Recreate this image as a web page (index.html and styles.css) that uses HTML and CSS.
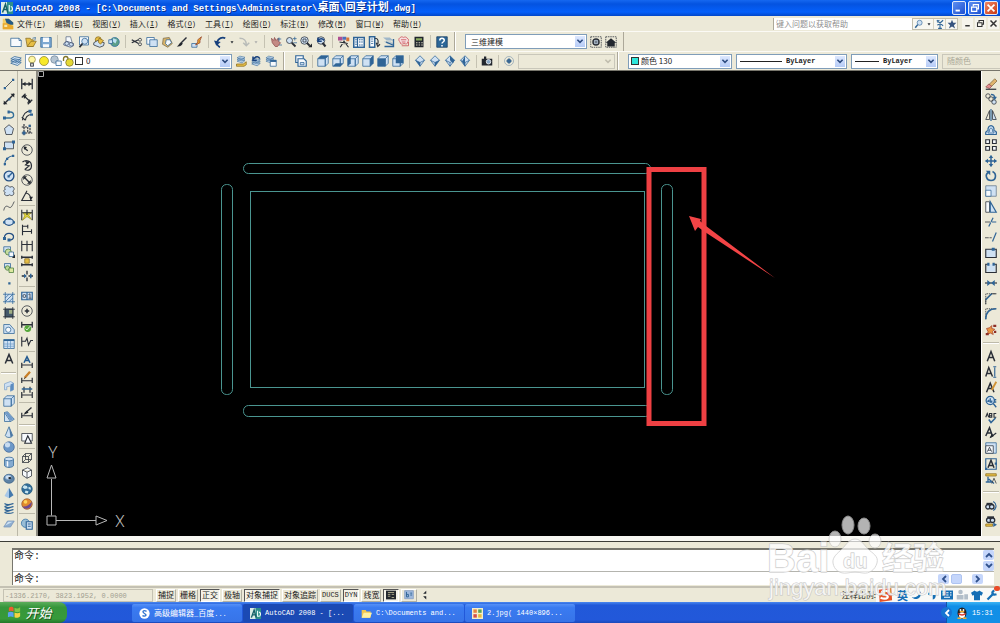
FILE: index.html
```html
<!DOCTYPE html>
<html lang="zh-CN">
<head>
<meta charset="utf-8">
<title>AutoCAD 2008</title>
<link rel="stylesheet" href="styles.css">
</head>
<body>
<svg class="sprites" aria-hidden="true">
  <symbol id="cube" viewBox="0 0 16 16"><path class="b l" d="M1 5h10v10H1zM1 5l4-4h10l-4 4M15 1v10l-4 4V5"/></symbol>
  <symbol id="dia" viewBox="0 0 16 16"><path class="b l" d="M8 1l6 6-6 8-6-8z"/><path class="b" d="M2 7l6 3 6-3M8 10v5"/></symbol>
  <symbol id="stack" viewBox="0 0 16 16"><path class="b l" d="M1 11l5-3 9 2-5 4zM1 8l5-3 9 2-5 4zM1 5l5-3 9 2-5 4z"/></symbol>
  <symbol id="down" viewBox="0 0 8 8"><path d="M1 2l3 3 3-3" fill="none" stroke="currentColor" stroke-width="1.8"/></symbol>
  <symbol id="acad" viewBox="0 0 16 16"><path fill="#d9ebe6" stroke="none" d="M0 0h16v16H0z"/><path fill="#2d8f8c" stroke="none" d="M8 0h8v16H8z"/><path d="M2 14L6 3l3 11M3 10h5" stroke="#156068" stroke-width="2" fill="none"/><path d="M11 4v8h2c3 0 3-6 0-6" stroke="#eafaf6" stroke-width="1.6" fill="none"/></symbol>
</svg>

<header class="titlebar">
  <svg class="app-icon"><use href="#acad"/></svg>
  <h1>AutoCAD 2008 - [C:\Documents and Settings\Administrator\<span>桌面</span>\<span>回享计划</span>.dwg]</h1>
  <div class="window-buttons">
    <button aria-label="最小化"><svg viewBox="0 0 14 14"><path d="M3 10h5" stroke-width="2.2"/></svg></button>
    <button aria-label="还原"><svg viewBox="0 0 14 14"><path d="M5 5V3h6v5H9M3 6h6v5H3z" stroke-width="1.4"/></svg></button>
    <button class="close" aria-label="关闭"><svg viewBox="0 0 14 14"><path d="M3 3l8 8M11 3l-8 8" stroke-width="2"/></svg></button>
  </div>
</header>

<nav class="menubar" aria-label="菜单">
  <svg class="doc-icon" viewBox="0 0 16 16"><path fill="#f3cd62" d="M1 1h8l6 5v9H1z"/><path fill="#245a86" d="M4 1h5l6 5v3H7z"/><path fill="#e9a92c" d="M1 7h6l8 4v4H1z"/><path fill="#f8e7a5" d="M3 9h4v3H3z"/></svg>
  <div class="menus">
    <button>文件<span>(<u>F</u>)</span></button>
    <button>编辑<span>(<u>E</u>)</span></button>
    <button>视图<span>(<u>V</u>)</span></button>
    <button>插入<span>(<u>I</u>)</span></button>
    <button>格式<span>(<u>O</u>)</span></button>
    <button>工具<span>(<u>T</u>)</span></button>
    <button>绘图<span>(<u>D</u>)</span></button>
    <button>标注<span>(<u>N</u>)</span></button>
    <button>修改<span>(<u>M</u>)</span></button>
    <button>窗口<span>(<u>W</u>)</span></button>
    <button>帮助<span>(<u>H</u>)</span></button>
  </div>
  <input class="help-box" type="text" placeholder="键入问题以获取帮助" aria-label="键入问题以获取帮助">
  <div class="help-buttons">
    <button class="wide" aria-label="搜索"><svg viewBox="0 0 16 16"><circle class="b l" cx="9" cy="6" r="4"/><path class="b" d="M6 9l-4 5" stroke-width="2.4"/></svg><svg class="tiny" viewBox="0 0 8 8"><path class="kf" d="M2 3h4L4 6z"/></svg></button>
    <button aria-label="通讯中心"><svg viewBox="0 0 16 16"><path class="b" d="M8 8v7M5 15h6M3 2l10 9M13 2L4 10M3 5l4-3" stroke-width="1.8"/></svg></button>
    <button aria-label="收藏夹"><svg viewBox="0 0 16 16"><path fill="#37547f" stroke="none" d="M8 1l2 5h5l-4 4 2 5-5-3-5 3 2-5-4-4h5z"/></svg></button>
  </div>
  <div class="mdi-buttons">
    <button aria-label="最小化文档"><svg viewBox="0 0 12 12"><path d="M3 9h6" stroke-width="2"/></svg></button>
    <button aria-label="还原文档"><svg viewBox="0 0 12 12"><path d="M4 4V2h6v5H8M2 5h6v5H2z" stroke-width="1.4"/></svg></button>
    <button aria-label="关闭文档"><svg viewBox="0 0 12 12"><path d="M2 2l8 8M10 2l-8 8" stroke-width="2"/></svg></button>
  </div>
</nav>

<div class="toolbar-row">
  <div class="toolbar" role="toolbar" aria-label="标准">
    <button aria-label="新建"><svg viewBox="0 0 16 16"><path class="b w" d="M1 3h11l3 3v8H1z"/><path class="b" d="M12 3v3h3"/></svg></button>
    <button aria-label="打开"><svg viewBox="0 0 16 16"><path class="y" d="M1 3h6l1 2h3v9H3z"/><path class="y" d="M3 14l5-7h7l-4 7z"/><path class="b" d="M10 3l4-1-1 4"/></svg></button>
    <button aria-label="保存"><svg viewBox="0 0 16 16"><path fill="#7ea9d2" class="b" d="M1 2h14v13H1z"/><path class="w" stroke="none" d="M4 2h8v6H4zM4 11h8v4H4z"/></svg></button>
    <i></i>
    <button aria-label="打印"><svg viewBox="0 0 16 16"><path class="w" stroke="#5b6b86" d="M4 8V1h6l2 7"/><path class="l" stroke="#4a5a78" d="M1 10l4-3 9 3v3l-4 2-9-3z"/><circle cx="5" cy="10" r="2.500" stroke="#4a5a78"/><circle cx="11" cy="11" r="2.500" stroke="#4a5a78"/></svg></button>
    <button aria-label="打印预览"><svg viewBox="0 0 16 16"><path class="b w" d="M2 1h12v11H2z"/><circle class="b l" cx="9" cy="7" r="4"/><path d="M6 10l-4 5" stroke-width="2.4"/></svg></button>
    <button aria-label="发布"><svg viewBox="0 0 16 16"><circle class="y" cx="7" cy="5" r="4"/><path class="l" d="M1 9l5-3 9 3-1 4-5 2-8-3z"/><path class="y" d="M8 3l6 3-4 5-3-3z"/></svg></button>
    <button aria-label="三维 DWF"><svg viewBox="0 0 16 16"><circle cx="9" cy="8" r="6" fill="#5d9f88" stroke="#2f6ca3"/><path fill="#bde0f4" stroke="none" d="M7 3l5 2-2 5-4-3z"/><path class="b l" d="M1 5h5v5H1z"/></svg></button>
    <i></i>
    <button aria-label="剪切"><svg viewBox="0 0 16 16"><path d="M1 5l9 5M1 9l9-4" stroke-width="1.8"/><circle cx="12" cy="5" r="2"/><circle cx="12" cy="11" r="2"/></svg></button>
    <button aria-label="复制"><svg viewBox="0 0 16 16"><path class="b w" d="M1 2h10v9H1z"/><path class="b l" d="M5 5h10v9H5z"/></svg></button>
    <button aria-label="粘贴"><svg viewBox="0 0 16 16"><path fill="#d9b56a" stroke="#7a6a48" d="M3 3l8-1 4 8-6 5-7-4z"/><path class="b w" d="M7 5h5l2 4-5 4-3-3z"/></svg></button>
    <button aria-label="特性匹配"><svg viewBox="0 0 16 16"><path d="M14 2L7 9" stroke-width="2"/><path class="kf" d="M7 8l2 2c-2 4-5 4-8 4 3-1 3-5 6-6z"/></svg></button>
    <button aria-label="块编辑器"><svg viewBox="0 0 16 16"><path class="b l" d="M1 10h7v5H1z"/><path fill="#e8a32c" stroke="#94432c" d="M14 1L9 5v3l-3 4 6-3V6z"/></svg></button>
    <i></i>
    <button aria-label="放弃"><svg viewBox="0 0 16 16"><path d="M4 8c2-5 7-7 11-5" stroke="#17407c" stroke-width="2.4"/><path fill="#17407c" stroke="none" d="M0 6l9 2-6 5z"/><path d="M4 9c0 3 2 5 4 6" stroke="#17407c" stroke-width="2"/></svg></button>
    <button class="drop" aria-label="放弃列表"><svg viewBox="0 0 8 8"><path class="kf" d="M2 3h4L4 6z"/></svg></button>
    <button aria-label="重做"><svg viewBox="0 0 16 16"><path d="M2 3c7 0 9 3 9 9M7 9l4 4 4-4" stroke="#b8bbb8" stroke-width="2"/></svg></button>
    <button class="drop" aria-label="重做列表"><svg viewBox="0 0 8 8"><path fill="#aaa" stroke="none" d="M2 3h4L4 6z"/></svg></button>
    <i></i>
    <button aria-label="平移"><svg viewBox="0 0 16 16"><path fill="#c38a84" stroke="#8c4b4c" d="M2 3l3 3 1-4 2 4 3-3v4l3 2-4 5H7L3 9z"/><path class="b" d="M12 2v5M10 4h5M12 12h4"/></svg></button>
    <button aria-label="实时缩放"><svg viewBox="0 0 16 16"><circle class="l" cx="6" cy="6" r="4"/><path d="M9 9l5 5" stroke-width="2.4"/><path class="b" d="M13 1v5M10.500 3.500h5M11 9h5"/></svg></button>
    <button aria-label="窗口缩放"><svg viewBox="0 0 16 16"><circle class="l" cx="6" cy="6" r="5"/><path d="M4 4h4v4H4z"/><path d="M9 9l4 4" stroke-width="2.400"/><path class="kf" d="M11 15h5v-5z"/></svg></button>
    <button aria-label="上一个缩放"><svg viewBox="0 0 16 16"><circle class="l" cx="8" cy="6" r="5"/><path d="M10 9l4 5" stroke-width="2.8"/><path d="M4 6c3-3 6-3 8 0M4 2v5h5" stroke="#17407c" stroke-width="2"/></svg></button>
    <i></i>
    <button aria-label="特性"><svg viewBox="0 0 16 16"><path fill="#b04f91" stroke="none" d="M0 1h6v5H0z"/><path fill="#4c6fbd" stroke="none" d="M6 1h5v4H6z"/><path fill="#d8763a" stroke="none" d="M11 2h4v5h-4z"/><path d="M3 15l5-8 6 8M2 8l11 2M8 6v5" stroke-width="1.5"/></svg></button>
    <button aria-label="设计中心"><svg viewBox="0 0 16 16"><path class="b w" d="M1 2h14v13H1z" stroke-width="2"/><path class="b" d="M6 2v13M3 5h2M3 8h2M3 11h2M8 5h2M11 5h2M8 8h2M11 8h2M8 12h2M11 12h2" stroke-width="1.500"/></svg></button>
    <button aria-label="工具选项板"><svg viewBox="0 0 16 16"><path class="b w" d="M2 1h7v14H2z" stroke-width="2"/><path class="b" d="M4 4h3M4 7h3M4 10h3"/><path d="M9 3c5 0 5 4 4 8M11 9l2 5 3-3" stroke-width="1.500"/></svg></button>
    <button aria-label="图纸集"><svg viewBox="0 0 16 16"><path fill="#9fb7c9" stroke="none" d="M0 2h9l5 4H5z"/><path fill="#bccad0" stroke="none" d="M1 7h9l5 4H6z"/><path class="b" d="M2 14h12V4M4 8l9 4" stroke-width="1.800"/></svg></button>
    <button aria-label="标记集"><svg viewBox="0 0 16 16"><path fill="#f5dfe0" stroke="#c8474e" d="M3 2c2-2 4 0 4 0s4-2 5 1c3 1 2 4 1 5 0 3-3 3-5 2-3 2-6 0-5-2C0 6 1 3 3 2z"/><path stroke="#c8474e" d="M5 13h9V8M4 5h7M5 8h5"/></svg></button>
    <button aria-label="计算器"><svg viewBox="0 0 16 16"><path class="kf" d="M2 1h12v14H2z"/><path fill="#8cad62" stroke="none" d="M4 3h8v3H4z"/><path stroke="#d6d2bf" stroke-dasharray="2 1.500" d="M4 9h9M4 12h9" stroke-width="1.600"/></svg></button>
    <i></i>
    <button aria-label="帮助"><svg viewBox="0 0 16 16"><path fill="#2c6798" stroke="#163c61" d="M1 1h14v14H1z"/><path d="M5 6c0-4 6-4 6 0 0 2-3 2-3 4M8 12v2" stroke="#fff" stroke-width="2"/></svg></button>
  </div>
  <div class="toolbar" role="toolbar" aria-label="工作空间">
    <label class="combo workspace"><select aria-label="工作空间"><option>三维建模</option></select><svg class="arrow"><use href="#down"/></svg></label>
    <button aria-label="工作空间设置"><svg viewBox="0 0 16 16"><path d="M1 1h14v14H1z" stroke-dasharray="2 1"/><circle cx="8" cy="8" r="4" class="l" stroke-width="2"/><circle cx="8" cy="8" r="1.500"/></svg></button>
    <button aria-label="我的工作空间"><svg viewBox="0 0 16 16"><path d="M1 1h14v14H1z" stroke-dasharray="2 1"/><path class="kf" d="M8 3l7 6h-2v5H3V9H1z"/></svg></button>
  </div>
</div>

<div class="toolbar-row second">
  <div class="toolbar" role="toolbar" aria-label="图层">
    <button aria-label="图层特性管理器"><svg><use href="#stack"/></svg></button>
    <label class="combo layer">
      <svg viewBox="0 0 16 16"><circle cx="8" cy="6" r="4.500" fill="#fff7a4" stroke="#958d48"/><path d="M6 11h4v4H6z" fill="#ccc"/></svg>
      <svg viewBox="0 0 16 16"><circle cx="8" cy="8" r="6" fill="#f7e929" stroke="#8f8436"/></svg>
      <svg viewBox="0 0 16 16"><circle cx="6" cy="6" r="5" fill="#b5c4d2" stroke="#74889a"/><path class="b w" d="M8 8h7v6H8z"/></svg>
      <svg viewBox="0 0 16 16"><path d="M2 8V5c0-4 6-4 6 0v2" stroke="#80752b" stroke-width="1.800"/><circle cx="10" cy="10" r="5" fill="#e4d836" stroke="#80752b"/></svg>
      <b class="swatch"></b>
      <select aria-label="图层"><option>0</option></select><svg class="arrow"><use href="#down"/></svg></label>
    <button aria-label="置为当前"><svg viewBox="0 0 16 16"><use href="#stack" width="16" height="12"/><path class="y" d="M2 12h9l4-3v4l-3 2H2z"/></svg></button>
    <button aria-label="上一个图层"><svg viewBox="0 0 16 16"><use href="#stack" y="3" width="16" height="13"/><path d="M5 5c3-4 7-3 8 0M4 2v5h5" stroke="#17407c" stroke-width="2"/></svg></button>
    <button aria-label="图层状态"><svg viewBox="0 0 16 16"><use href="#stack" width="13" height="12"/><path class="b w" d="M7 7h8v8H7z"/><path class="b" d="M7 8h8" stroke-width="2.500"/></svg></button>
  </div>
  <div class="toolbar views" role="toolbar" aria-label="视图">
    <button aria-label="命名视图"><svg viewBox="0 0 16 16"><path class="b w" d="M1 1h10v9H1z" stroke-width="1.500"/><path class="b w" d="M4 5h8l3 3v7H4z" stroke-width="1.500"/><path class="b l" d="M7 10h5v3H7z"/></svg></button>
    <i></i>
    <button aria-label="俯视"><svg viewBox="0 0 16 16"><use href="#cube"/><path class="bf" d="M1 5l4-4h10l-4 4z"/></svg></button>
    <button aria-label="仰视"><svg viewBox="0 0 16 16"><use href="#cube"/><path class="bf" d="M1 15l4-4h10l-4 4z"/></svg></button>
    <button aria-label="左视"><svg viewBox="0 0 16 16"><use href="#cube"/><path class="bf" d="M1 5l4-4v10l-4 4z"/></svg></button>
    <button aria-label="右视"><svg viewBox="0 0 16 16"><use href="#cube"/><path class="bf" d="M11 5l4-4v10l-4 4z"/></svg></button>
    <button aria-label="主视"><svg viewBox="0 0 16 16"><use href="#cube"/><path class="bf" d="M1 5h10v10H1z"/></svg></button>
    <button aria-label="后视"><svg viewBox="0 0 16 16"><use href="#cube"/><path class="bf" d="M5 1h10v10H5z"/></svg></button>
    <i></i>
    <button aria-label="西南等轴测"><svg viewBox="0 0 16 16"><use href="#dia"/><path class="bf" d="M2 7l6 3v5z"/></svg></button>
    <button aria-label="东南等轴测"><svg viewBox="0 0 16 16"><use href="#dia"/><path class="bf" d="M14 7l-6 3v5z"/></svg></button>
    <button aria-label="东北等轴测"><svg viewBox="0 0 16 16"><use href="#dia"/><path class="bf" d="M8 1l6 6-2 4-4-4z"/></svg></button>
    <button aria-label="西北等轴测"><svg viewBox="0 0 16 16"><use href="#dia"/><path class="bf" d="M8 1v14L4 9z"/></svg></button>
    <i></i>
    <button aria-label="创建相机"><svg viewBox="0 0 16 16"><path class="kf" d="M1 5h3V2h3v3h8v9H1z"/><circle cx="10" cy="9" r="3" fill="#89a7c5" stroke="#fff"/></svg></button>
    <i></i>
    <button aria-label="上一视图"><svg viewBox="0 0 16 16"><circle cx="8" cy="8" r="6" stroke="#8ea3b3"/><circle cx="8" cy="8" r="3" fill="#496f91" stroke="none"/><path class="b" d="M8 4v8M4 8h8"/></svg></button>
    <label class="combo view-list off"><select aria-label="视图列表" disabled><option></option></select><svg class="arrow"><use href="#down"/></svg></label>
  </div>
  <div class="toolbar props" role="toolbar" aria-label="特性">
    <label class="combo color"><b class="swatch cyan"></b><select aria-label="颜色"><option>颜色 130</option></select><svg class="arrow"><use href="#down"/></svg></label>
    <label class="combo linetype"><b class="rule"></b><select class="latin" aria-label="线型"><option>ByLayer</option></select><svg class="arrow"><use href="#down"/></svg></label>
    <label class="combo weight"><b class="rule short"></b><select class="latin" aria-label="线宽"><option>ByLayer</option></select><svg class="arrow"><use href="#down"/></svg></label>
    <label class="combo plot off"><select aria-label="打印样式" disabled><option>随颜色</option></select></label>
  </div>
</div>

<main class="workspace-area">
  <div class="palette" role="toolbar" aria-label="绘图">
    <button aria-label="直线"><svg viewBox="0 0 16 16"><path d="M2 14L14 2"/><path class="bf" d="M1 12h3v3H1zM12 1h3v3h-3z"/></svg></button>
    <button aria-label="构造线"><svg viewBox="0 0 16 16"><path d="M1 15L15 1" stroke-width="2"/><path class="kf" d="M1 15v-5l5 5zM15 1v5l-5-5z"/><path class="bf" d="M7 7h3v3H7z"/></svg></button>
    <button aria-label="多段线"><svg viewBox="0 0 16 16"><path d="M2 12h8c6 0 5-8 0-8H8" stroke="#357099" stroke-width="1.800"/><path class="bf" d="M0 10h4v4H0zM6 2h3v4H6z"/></svg></button>
    <button aria-label="正多边形"><svg viewBox="0 0 16 16"><path class="l" d="M8 1l6 5-2 8H4L2 6z"/></svg></button>
    <button aria-label="矩形"><svg viewBox="0 0 16 16"><path class="l" d="M2 4h12v9H2z"/><path class="bf" d="M0 11h4v4H0zM12 2h4v4h-4z"/></svg></button>
    <button aria-label="圆弧"><svg viewBox="0 0 16 16"><path class="b" d="M2 15C2 8 7 3 14 2" stroke-width="1.500"/><path class="bf" d="M1 12h3v3H1zM12 1h3v3h-3zM4 5h3v3H4z"/></svg></button>
    <button aria-label="圆"><svg viewBox="0 0 16 16"><circle class="l" cx="8" cy="8" r="6.500" stroke="#244f83" stroke-width="1.800"/><path class="b" d="M8 8l4-4" stroke-width="2"/><path class="bf" d="M6 7h3v3H6z"/></svg></button>
    <button aria-label="修订云线"><svg viewBox="0 0 16 16"><path class="l" d="M3 6C0 1 7-1 9 3c5-3 8 3 4 5 4 4-1 8-4 5-4 3-9 0-6-3-3-1-2-4 0-4z"/></svg></button>
    <button aria-label="样条曲线"><svg viewBox="0 0 16 16"><path d="M1 14c1-5 3-7 6-5 4 3 5-1 8-7"/></svg></button>
    <button aria-label="椭圆"><svg viewBox="0 0 16 16"><ellipse class="l" cx="8" cy="8" rx="6" ry="4.500" stroke="#244f83" stroke-width="1.600"/><path class="bf" d="M0 7h3v3H0zM13 7h3v3h-3zM7 2h3v3H7z"/></svg></button>
    <button aria-label="椭圆弧"><svg viewBox="0 0 16 16"><path d="M2 9c-1-8 13-7 12-1 0 4-3 4-6 4" stroke="#244f83" stroke-width="1.700"/><path class="bf" d="M0 8h4v4H0zM6 10h4v4H6z"/></svg></button>
    <button aria-label="插入块"><svg viewBox="0 0 16 16"><path class="b l" d="M1 1h9v7H1z"/><circle cx="7" cy="8" r="4" fill="#c8dca0" stroke="#497c3b"/><path class="b w" d="M8 8h6v6H8z"/><path class="kf" d="M12 16h4v-5z"/></svg></button>
    <button aria-label="创建块"><svg viewBox="0 0 16 16"><path class="b l" d="M2 2h8v6H2z"/><circle cx="6" cy="8" r="3" fill="#bad993" stroke="#497c3b"/><path d="M8 8h6v6H8z" fill="#dce8a0" stroke="#497c3b"/></svg></button>
    <button aria-label="点"><svg viewBox="0 0 16 16"><path class="bf" d="M7 7h3v3H7z"/></svg></button>
    <button aria-label="图案填充"><svg viewBox="0 0 16 16"><path class="l" stroke="none" d="M2 2h12v12H2z"/><path class="b" d="M3 0v16M13 0v16M0 3h16M0 13h16M3 8l5-5M3 13L13 3M8 13l5-5"/></svg></button>
    <button aria-label="渐变色"><svg viewBox="0 0 16 16"><path fill="#44586a" stroke="none" d="M2 2h12v12H2z"/><path fill="#9fae84" stroke="none" d="M8 4h5v5H8z"/><path d="M3 0v16M13 0v16M0 3h16M0 13h16"/></svg></button>
    <button aria-label="面域"><svg viewBox="0 0 16 16"><path class="b l" d="M1 2h8l6 7v5H1z"/><circle class="b w" cx="7" cy="9" r="3.500"/></svg></button>
    <button aria-label="表格"><svg viewBox="0 0 16 16"><path class="b l" d="M1 2h14v12H1z"/><path class="b" d="M1 3h14" stroke-width="2"/><path stroke="#6d9cc8" d="M6 4v10M10 4v10M1 8h14M1 11h14"/></svg></button>
    <button aria-label="多行文字"><svg viewBox="0 0 16 16"><path d="M3 14L8 2l5 12M5 10h6" stroke-width="2"/></svg></button>
    <i class="group"></i>
    <button aria-label="多段体"><svg viewBox="0 0 16 16"><path class="l" stroke="#7fa3c9" d="M2 5l8-3 4 2v9l-4 2V8L5 9v4H2z"/><path fill="#5c8cc0" stroke="none" d="M10 6l4-2v9l-4 2z"/></svg></button>
    <button aria-label="长方体"><svg viewBox="0 0 16 16"><use href="#cube"/></svg></button>
    <button aria-label="楔体"><svg viewBox="0 0 16 16"><path class="b l" d="M2 2v12h8zM2 2l4-1 9 10-5 3"/><path fill="#6f9aca" stroke="none" d="M3 2l3-1 8 10-4 2z"/></svg></button>
    <button aria-label="圆锥体"><svg viewBox="0 0 16 16"><path class="b l" d="M8 1L3 13c2 3 8 3 10 0z"/><path fill="#4c78a4" stroke="none" d="M8 1l5 12-3 2z"/></svg></button>
    <button aria-label="球体"><svg viewBox="0 0 16 16"><circle cx="8" cy="8" r="7" fill="#6c98c8" stroke="#456a99"/><circle cx="6" cy="5" r="3.500" fill="#c8dcf0" stroke="none"/></svg></button>
    <button aria-label="圆柱体"><svg viewBox="0 0 16 16"><path class="b" fill="#84aad0" d="M2 4v9c2 3 10 3 12 0V4"/><path class="w" stroke="none" d="M5 5h2v9H5z"/><ellipse class="b l" cx="8" cy="4" rx="6" ry="2.500"/></svg></button>
    <button aria-label="圆环体"><svg viewBox="0 0 16 16"><ellipse cx="8" cy="9" rx="7" ry="6" fill="#5d82a5" stroke="#3c6287"/><ellipse class="l" cx="7" cy="7" rx="4" ry="3" stroke="#7fa3c9"/><ellipse class="kf" cx="9" cy="8" rx="2" ry="1.500"/></svg></button>
    <button aria-label="棱锥体"><svg viewBox="0 0 16 16"><path fill="#a9c8e8" stroke="none" d="M8 1L2 12l6 3z"/><path fill="#4479ad" stroke="none" d="M8 1v14l6-4z"/></svg></button>
    <button aria-label="螺旋"><svg viewBox="0 0 16 16"><path class="b" d="M2 2c4 3 9 1 12 0M2 6c4 3 9 1 12 0M2 10c4 3 9 1 12 0M2 14c4 2 9 1 12 0M14 2L2 6M14 6L2 10M14 10L2 14" stroke-width="1.500"/></svg></button>
    <button aria-label="平面曲面"><svg viewBox="0 0 16 16"><path fill="#8eaed0" stroke="#7996b9" d="M1 12l5-8h9l-5 8z"/><path class="l" stroke="none" d="M3 10l4-5h6z"/></svg></button>
  </div>
  <div class="palette dims" role="toolbar" aria-label="标注">
    <button aria-label="线性"><svg viewBox="0 0 16 16"><path d="M1 1v14M15 1v14M2 8h12" stroke-width="1.700"/><path class="kf" d="M2 8l4-3v6zM14 8l-4-3v6z"/></svg></button>
    <button aria-label="对齐"><svg viewBox="0 0 16 16"><path d="M1 6l5-5M9 15l6-6M4 4l9 8" stroke-width="1.700"/><path class="kf" d="M3 3h5L4 8zM13 13H8l4-5z"/></svg></button>
    <button aria-label="弧长"><svg viewBox="0 0 16 16"><path d="M2 15c0-8 4-12 12-13M6 15c0-5 3-7 8-8M1 11l5 4" stroke-width="1.500"/><path class="bf" d="M10 1h4v4h-4zM12 6h4v3h-4z"/></svg></button>
    <button aria-label="坐标"><svg viewBox="0 0 16 16"><path d="M4 0v15M1 4h8M1 12h14M9 4v8M12 1v11" stroke-dasharray="3 1" stroke-width="1.500"/><path class="bf" d="M2 10h4v4H2zM10 1h3v3h-3z"/></svg></button>
    <i></i>
    <button aria-label="半径"><svg viewBox="0 0 16 16"><circle cx="8" cy="8" r="7"/><path d="M9 9L4 5" stroke-width="1.800"/><path class="kf" d="M3 3l5 1-3 4z"/></svg></button>
    <button aria-label="折弯"><svg viewBox="0 0 16 16"><path d="M2 4c5-4 12-1 12 5s-5 7-9 5M10 4L6 8l5 1-6 5" stroke-width="1.500"/><path class="kf" d="M5 3h7l-3 4z"/></svg></button>
    <button aria-label="直径"><svg viewBox="0 0 16 16"><circle cx="8" cy="8" r="7"/><path d="M4 4l8 8" stroke-width="1.800"/><path class="kf" d="M3 3h5L3 8zM13 13H8l5-5z"/></svg></button>
    <button aria-label="角度"><svg viewBox="0 0 16 16"><path d="M8 1L1 14h14M7 4c4 1 6 5 6 9" stroke-width="1.500"/><path class="kf" d="M11 9h5l-3 5z"/></svg></button>
    <i></i>
    <button aria-label="快速标注"><svg viewBox="0 0 16 16"><path fill="#ddd13a" stroke="#a69924" d="M3 5h11l-4 3 4 6-6-4-6 5 3-6z"/><path d="M1 1v14M15 1v14M8 1v7M1 5h14" stroke-width="1.500"/></svg></button>
    <button aria-label="基线"><svg viewBox="0 0 16 16"><path d="M2 1v14M2 3h7M9 1v5M2 10h12M14 7v6" stroke-width="1.500"/></svg></button>
    <button aria-label="连续"><svg viewBox="0 0 16 16"><path d="M1 1v14M8 1v14M15 1v14M1 6h14" stroke-width="1.500"/></svg></button>
    <button aria-label="标注间距"><svg viewBox="0 0 16 16"><path d="M1 1v4M15 1v4M1 11v4M15 11v4M1 3h14M1 13h14" stroke-width="1.800"/><path class="y" d="M5 5h6v6H5z"/></svg></button>
    <button aria-label="标注打断"><svg viewBox="0 0 16 16"><path d="M8 1v5M8 10v5M1 8h5M10 8h6" stroke-width="1.800"/><path class="bf" d="M4 5l4 3-4 3zM12 5h2v6h-2z"/></svg></button>
    <i></i>
    <button aria-label="公差"><svg viewBox="0 0 16 16"><path class="b l" d="M1 3h14v10H1zM8 3v10" stroke-width="1.600"/><circle cx="4.500" cy="8" r="2"/><path d="M10 6l2-1v6M10 11h4"/></svg></button>
    <button aria-label="圆心标记"><svg viewBox="0 0 16 16"><circle cx="8" cy="8" r="7"/><path d="M8 5v6M5 8h6" stroke-width="2"/></svg></button>
    <button aria-label="检验"><svg viewBox="0 0 16 16"><path d="M1 1v8M15 1v8M1 5h14" stroke-width="1.700"/><circle cx="9" cy="10" r="4.500" fill="#56a83b" stroke="none"/><path d="M6 10l2 2 4-5" stroke="#fff"/></svg></button>
    <button aria-label="折弯线性"><svg viewBox="0 0 16 16"><path d="M1 1v13M1 7h5l2-4 2 9 3-6h3" stroke-width="1.500"/></svg></button>
    <i></i>
    <button aria-label="编辑标注"><svg viewBox="0 0 16 16"><path d="M1 9v7M15 9v7M1 12h14" stroke-width="1.600"/><path d="M4 9l4-8 4 8M5 6h6" stroke="#20588f" stroke-width="2"/></svg></button>
    <button aria-label="编辑标注文字"><svg viewBox="0 0 16 16"><path d="M1 9v7M15 9v7M1 13h14" stroke-width="1.600"/><path d="M5 9l7-8" stroke="#c87e26" stroke-width="3"/><path d="M4 11l2-3"/></svg></button>
    <button aria-label="标注更新"><svg viewBox="0 0 16 16"><path d="M1 8v8M15 8v8M1 12h14M4 1v8M12 1v8" stroke-width="1.600"/><path class="b" d="M1 4h14" stroke-width="2"/></svg></button>
    <i></i>
    <button aria-label="标注样式"><svg viewBox="0 0 16 16"><path d="M1 9v7M15 9v7M1 13h14" stroke-width="1.600"/><path d="M5 10l9-8" stroke-width="1.800"/><path class="kf" d="M3 12l5-6 2 3z"/></svg></button>
    <i class="group"></i>
    <button aria-label="二维线框"><svg viewBox="0 0 16 16"><path class="w" d="M1 2h14v10H1z"/><path class="w" d="M9 5l5 10H5z" stroke-width="1.500"/></svg></button>
    <i></i>
    <button aria-label="三维线框"><svg viewBox="0 0 16 16"><path d="M2 6h8v8H2zM6 2h8v8H6zM2 6l4-4M10 6l4-4M10 14l4-4M2 14l4-4"/></svg></button>
    <button aria-label="三维隐藏"><svg viewBox="0 0 16 16"><path class="w" d="M2 4l7-3 5 3v8l-6 3-6-4zM2 4l6 3 6-3M8 7v8"/></svg></button>
    <button aria-label="真实"><svg viewBox="0 0 16 16"><circle cx="8" cy="8" r="7" fill="#306c99" stroke="#285c7c"/><path fill="#c9e5ef" stroke="none" d="M4 3l4 1 1 3-4 1-3-2zM10 5l3 1v3l-3-1zM6 10l4 1-1 3-4-1z"/></svg></button>
    <button aria-label="概念"><svg viewBox="0 0 16 16"><circle cx="8" cy="8" r="7" fill="#e08a2d" stroke="#9a582b"/><path fill="#6e4a92" stroke="none" d="M2 11c4 1 9-1 12-6 2 8-8 13-12 6z"/><circle cx="6" cy="5" r="2.500" fill="#ffd45b" stroke="none"/></svg></button>
    <i></i>
    <button aria-label="管理视觉样式"><svg viewBox="0 0 16 16"><circle cx="6" cy="7" r="5.500" fill="#98bdd6" stroke="#2f6ca3"/><path class="b l" d="M7 5h8v10H7z" stroke-width="1.500"/><path class="b" d="M9 8h4M9 11h4" stroke-width="1.500"/></svg></button>
  </div>

  <section class="canvas" aria-label="绘图区">
    <svg class="drawing" role="img" aria-label="桌面俯视轮廓">
      <path class="corner" d="M.5.500h5v5h-5z"/>
      <g class="outline">
        <rect x="205.500" y="92.500" width="407" height="10" rx="5"/>
        <rect x="183.500" y="113.500" width="11" height="210" rx="5"/>
        <rect x="212.500" y="120.500" width="394" height="196"/>
        <rect x="205.500" y="334.500" width="407" height="11" rx="5"/>
      </g>
      <rect class="marker" x="611" y="98.500" width="55" height="254"/>
      <rect class="slot" x="623.500" y="113.500" width="11" height="210" rx="5"/>
      <path class="pointer" d="M651 145l12 3-1 2 6 5 69 52-70-46-7-5-3 4z"/>
    </svg>
    <svg class="ucs" viewBox="0 0 90 96" role="img" aria-label="坐标系 X Y">
      <path d="M9.500 74.500V38M14 79.500h40M5 75h9v9H5zM5 37h9L9.500 24zM54 75v9l11-4.500z"/>
      <text x="6" y="17">Y</text><text x="73" y="86">X</text>
    </svg>
  </section>

  <div class="palette modify" role="toolbar" aria-label="修改">
    <button aria-label="删除"><svg viewBox="0 0 16 16"><path fill="#dfb46e" stroke="#806a43" d="M5 9l8-8 3 3-7 7z"/><path fill="#e28e90" stroke="#93504d" d="M1 12l4-4 4 3-3 3z"/><path d="M1 15h14" stroke-width="1.600"/></svg></button>
    <button aria-label="复制"><svg viewBox="0 0 16 16"><circle cx="4" cy="4" r="3"/><circle class="l" cx="12" cy="12" r="3"/><circle cx="8" cy="8" r="3"/><path class="b" d="M8 2c4 0 5 1 5 5M11 5l2 3 2-3" stroke-width="1.800"/></svg></button>
    <button aria-label="镜像"><svg viewBox="0 0 16 16"><path d="M6 2v12H1z"/><path class="l" d="M10 2v12h5z"/><path class="b" d="M8 0v16" stroke-width="1.600"/></svg></button>
    <button aria-label="偏移"><svg viewBox="0 0 16 16"><path class="b l" d="M1 14c-1-4 2-5 3-5C3 0 13 0 12 9c2 0 4 1 3 5z" stroke-width="1.600"/><path class="b" d="M4 12h8c0-2-1-2-2-2 1-6-5-6-4 0-2 0-2 1-2 2z"/></svg></button>
    <button aria-label="阵列"><svg viewBox="0 0 16 16"><path class="w" d="M1 1h5v5H1zM10 1h5v5h-5zM1 10h5v5H1zM10 10h5v5h-5z" stroke-width="1.500"/></svg></button>
    <button aria-label="移动"><svg viewBox="0 0 16 16"><path class="b" d="M8 1v14M1 8h14" stroke-width="2"/><path class="bf" d="M8 0l3 4H5zM8 16l3-4H5zM0 8l4-3v6zM16 8l-4-3v6z"/></svg></button>
    <button aria-label="旋转"><svg viewBox="0 0 16 16"><path class="b" d="M5 3c-6 3-3 11 3 11 7 0 8-9 2-12" stroke-width="2.200"/><path class="bf" d="M1 1h6v6z"/></svg></button>
    <button aria-label="缩放"><svg viewBox="0 0 16 16"><path class="l" d="M1 1h14v14H1z" stroke="#62758b"/><path class="b w" d="M1 7h7v8H1z"/></svg></button>
    <button aria-label="拉伸"><svg viewBox="0 0 16 16"><path class="w" d="M1 1h5v14H1z"/><path class="b l" d="M7 1v14h8z" stroke-width="1.600"/></svg></button>
    <button aria-label="修剪"><svg viewBox="0 0 16 16"><path d="M0 8h7"/><path class="b" d="M5 14l6-12M9 8h7" stroke-width="1.600" stroke-dasharray="6 1"/></svg></button>
    <button aria-label="延伸"><svg viewBox="0 0 16 16"><path d="M0 9h9" stroke-dasharray="5 1"/><path class="b" d="M10 14l5-12" stroke-width="1.600"/></svg></button>
    <button aria-label="打断于点"><svg viewBox="0 0 16 16"><path class="l" d="M1 3h14v11H1z" stroke-width="1.500"/><path class="bf" d="M9 1h4v4H9z"/></svg></button>
    <button aria-label="打断"><svg viewBox="0 0 16 16"><path class="l" stroke="none" d="M2 3h12v10H2z"/><path d="M4 3H1v11h14V3h-3" stroke-width="1.500"/><path class="bf" d="M3 1h3v4H3zM10 1h3v4h-3z"/></svg></button>
    <button aria-label="合并"><svg viewBox="0 0 16 16"><path d="M0 8h16" stroke-width="1.500"/><path class="bf" d="M3 4l5 4-5 4zM13 4L8 8l5 4z"/></svg></button>
    <button aria-label="倒角"><svg viewBox="0 0 16 16"><path d="M1 15V1h14" stroke-dasharray="2 1"/><path d="M1 15V8l7-7h7"/><path class="b" d="M1 9l8-8" stroke-width="2"/></svg></button>
    <button aria-label="圆角"><svg viewBox="0 0 16 16"><path d="M1 15V1h14" stroke-dasharray="2 1"/><path class="b" d="M1 15C1 6 6 1 15 1" stroke-width="2"/></svg></button>
    <button aria-label="分解"><svg viewBox="0 0 16 16"><path fill="#e99442" stroke="#a44632" d="M2 6l4-1 3-3v4l4 1-3 3 1 4-4-2-4 2 1-4z"/><path fill="#8d3028" stroke="none" d="M11 1h4v3h-4zM1 12h4v3H1zM12 9h3v3h-3z"/></svg></button>
    <i class="group"></i>
    <button aria-label="多行文字"><svg viewBox="0 0 16 16"><path d="M3 15L8 2l5 13M5 10h6" stroke-width="2"/></svg></button>
    <button aria-label="单行文字"><svg viewBox="0 0 16 16"><path d="M1 14L5 2l5 12M2 10h6" stroke-width="1.900"/><path class="b" d="M13 2v12M11 1h4M11 15h4" stroke-width="1.500"/></svg></button>
    <button aria-label="编辑文字"><svg viewBox="0 0 16 16"><path d="M2 15L7 3l5 12M4 10h6" stroke-width="2"/><path d="M15 1L9 12" stroke="#d19335" stroke-width="2.500"/></svg></button>
    <button aria-label="查找"><svg viewBox="0 0 16 16"><circle class="b l" cx="7" cy="6" r="5.500" stroke-width="1.700"/><path class="b" d="M3 7h2V5M7 3v5h2V6M11 10l4 5M12 5h3M12 8h3" stroke-width="1.700"/></svg></button>
    <button aria-label="拼写检查"><svg viewBox="0 0 16 16"><path d="M1 7l2-5 2 5M6 2v5h3V5H6h3V2zM15 2h-3v5h3" stroke-width="1.500"/><path class="b" d="M5 10l3 4 6-6" stroke-width="2"/></svg></button>
    <button aria-label="文字样式"><svg viewBox="0 0 16 16"><path d="M1 12L6 1l4 11M3 8h6" stroke-width="2"/><path d="M7 14l8-6" stroke-width="1.500"/><path class="kf" d="M6 15l3-6 3 3z"/></svg></button>
    <button aria-label="缩放文字"><svg viewBox="0 0 16 16"><path class="b l" d="M1 1h14v14H1z"/><path class="w" d="M1 5h10v10H1z"/><path d="M3 13l3-6 3 6M4 11h4"/></svg></button>
    <button aria-label="对正文字"><svg viewBox="0 0 16 16"><path class="b" d="M1 1h14v14H1z" stroke-width="1.500"/><path d="M4 13l4-10 4 10M5 10h6" stroke-width="2"/><path class="bf" d="M0 13h3v3H0zM13 6h3v3h-3z"/></svg></button>
    <button aria-label="空间转换"><svg viewBox="0 0 16 16"><path class="y" d="M1 1h14v3H1z"/><path class="b" d="M4 5v7h5M1 12h5M5 8l7 6" stroke-width="1.800"/><path d="M9 14l3-7 3 7"/></svg></button>
    <i class="group"></i>
    <button aria-label="漫游"><svg viewBox="0 0 16 16"><circle class="l" cx="4" cy="9" r="3" stroke-width="1.700"/><circle class="l" cx="9" cy="9" r="3" stroke-width="1.700"/><path d="M2 5h8" stroke-width="2.500"/><path class="b" d="M11 2c5 3 5 9 0 12" stroke-width="1.500"/></svg></button>
    <button aria-label="飞行"><svg viewBox="0 0 16 16"><circle class="l" cx="5" cy="7" r="3" stroke-width="1.700"/><circle class="l" cx="10" cy="7" r="3" stroke-width="1.700"/><path d="M3 3h9" stroke-width="2.500"/><path class="y" d="M1 12h9v3H1z"/><path class="bf" d="M11 10l5 3-5 3z"/></svg></button>
  </div>
</main>

<section class="command" aria-label="命令行">
  <div class="command-box">
    <div class="history"><p>命令<span>:</span></p>
      <div class="scroll-v"><button aria-label="向上滚动"><svg class="flip"><use href="#down"/></svg></button><button aria-label="向下滚动"><svg><use href="#down"/></svg></button></div>
    </div>
    <div class="prompt"><label for="cmd">命令<span>:</span></label><input id="cmd" type="text">
      <div class="scroll-h"><button aria-label="向左滚动"><svg class="left"><use href="#down"/></svg></button><b></b><button aria-label="向右滚动"><svg class="right"><use href="#down"/></svg></button></div>
    </div>
  </div>
</section>

<div class="statusbar">
  <output>-1336.2170, 3823.1952, 0.0000</output>
  <div class="modes">
    <button>捕捉</button><button>栅格</button><button class="on">正交</button><button>极轴</button><button class="on">对象捕捉</button><button>对象追踪</button><button class="latin">DUCS</button><button class="latin on">DYN</button><button>线宽</button>
    <button class="on model" aria-label="模型"><svg viewBox="0 0 16 16"><path class="kf" d="M0 1h16v14H0z"/><path stroke="#aaa68b" d="M3 4h10M3 7h4M9 7h4M3 10h4M9 12h4" stroke-width="1.500"/></svg></button>
    <button aria-label="布局"><svg viewBox="0 0 16 16"><path fill="#9eb8dc" stroke="#7892bd" d="M1 1h14v13H1z"/><path class="b" d="M4 3v8h3V7H4M10 5h3M10 8h3" stroke-width="1.500"/></svg></button>
    <button class="steps" aria-label="切换布局"><svg viewBox="0 0 8 16"><path class="kf" d="M1 6h5V1zM1 10h5v5z"/></svg></button>
  </div>
  <span class="scale">注释比例:</span>
  <div class="ime" aria-label="输入法">
    <svg class="sogou" viewBox="0 0 18 18"><path fill="#e65327" d="M2 3l14-2 1 14-14 2z"/><path d="M13 5c-8-3-10 3-4 4s3 6-5 3" fill="none" stroke="#fff" stroke-width="2.500"/></svg>
    <span>英</span>
    <svg viewBox="0 0 16 16"><path fill="#176fb5" d="M13 3c2 10-7 13-12 8 6 1 10-2 12-8z"/></svg>
    <svg viewBox="0 0 16 16"><path fill="#176fb5" d="M3 5h3v3H3zM9 8h4c0 4-1 5-4 6z"/></svg>
    <svg viewBox="0 0 16 16"><path fill="#176fb5" d="M0 2h16v12H0z"/><path d="M2 5h3M7 5h3M12 5h2M2 8h3M7 8h3M12 8h2M4 11h8" stroke="#fff" stroke-width="1.500"/></svg>
    <svg viewBox="0 0 16 16"><g fill="#b2bec9"><circle cx="6" cy="4" r="3"/><path d="M1 8h9v6H1z"/><path d="M11 7h5v7h-5z"/></g></svg>
    <svg viewBox="0 0 16 16"><path fill="#176fb5" d="M5 2c1 2 5 2 6 0l5 3-2 4-2-1v7H4V8L2 9 0 5z"/></svg>
    <svg viewBox="0 0 16 16"><path d="M2 14l8-8" fill="none" stroke="#176fb5" stroke-width="3"/><path d="M11 2c-4 2-3 7 3 5" fill="none" stroke="#176fb5" stroke-width="3"/></svg>
    <b class="dot"></b>
  </div>
</div>

<footer class="taskbar">
  <button class="start"><svg viewBox="0 0 16 16"><path fill="#ed5d2f" d="M2 3c2-2 4-1 5 0v4c-2-1-4-1-5 0z"/><path fill="#82c846" d="M8 3c2 1 4 1 6-1v5c-2 1-4 1-6 0z"/><path fill="#5aa3ef" d="M1 8c2-1 4-1 6 0v5c-2-1-4-1-6 0z"/><path fill="#f6d342" d="M8 8c2 1 4 1 6 0v4c-2 2-4 2-6 1z"/></svg>开始</button>
  <div class="tasks">
    <button><svg viewBox="0 0 16 16"><circle cx="8" cy="8" r="7.500" fill="#fff"/><path d="M11 5C6 2 4 6 8 8s2 5-3 3" fill="none" stroke="#3274cf" stroke-width="2"/></svg><span>高级编辑器<span class="latin">_</span>百度<span class="latin">...</span></span></button>
    <button class="active"><svg><use href="#acad"/></svg><span class="latin">AutoCAD 2008 - [...</span></button>
    <button><svg viewBox="0 0 16 16"><path fill="#f3c74e" d="M1 3h6l1 2h6v9H1z"/><path fill="#fff0a2" d="M4 7h12l-3 7H1z"/></svg><span class="latin">C:\Documents and...</span></button>
    <button><svg viewBox="0 0 16 16"><path fill="#f6efca" d="M0 0h16v16H0z"/><path fill="#e58441" d="M2 2h5v5H2z"/><path fill="#5ba356" d="M9 2h5v5H9z"/><path fill="#d44d4d" d="M2 9h5v5H2z"/><path fill="#e7bb3c" d="M9 9h5v5H9z"/></svg><span class="latin">2.jpg( 1440×896...</span></button>
  </div>
  <div class="tray">
    <button aria-label="隐藏图标"><svg class="left"><use href="#down"/></svg></button>
    <svg class="qq" viewBox="0 0 16 16"><ellipse cx="8" cy="8" rx="6" ry="7.500" fill="#222"/><ellipse cx="8" cy="11" rx="4" ry="4" fill="#fff"/><path d="M3 8c3 2 7 2 10 0v2c-3 2-7 2-10 0z" fill="#df3e31"/><path fill="#f4ad31" d="M5 5h6v2H5zM2 14h5v2H2zM9 14h5v2H9z"/><circle cx="6" cy="4" r="1.200" fill="#fff"/><circle cx="10" cy="4" r="1.200" fill="#fff"/></svg>
    <time>15:31</time>
  </div>
</footer>

<svg class="watermark" viewBox="0 0 184 92" role="img" aria-label="Baidu 经验 jingyan.baidu.com">
  <g class="paw"><ellipse cx="84" cy="13" rx="6" ry="9"/><ellipse cx="100" cy="14" rx="6" ry="8"/><ellipse cx="71" cy="27" rx="6" ry="8"/><ellipse cx="111" cy="29" rx="6" ry="7"/><path d="M91 27c6 0 9 6 13 10s11 7 9 14-8 11-14 10c-5-1-11-1-16 0-7 1-13-3-14-10-1-6 5-10 9-14s7-10 13-10z"/></g>
  <g class="mark"><text class="brand" x="3" y="60">Bai</text><text class="du" x="79" y="56">du</text><text class="cjk" x="118" y="57">经验</text><text class="site" x="5" y="83">jingyan.baidu.com</text></g>
</svg>
</body>
</html>
```

FILE: styles.css
```css
:root {
  --face: #ece9d8;
  --edge: #aca899;
  --cjk: "Noto Sans CJK SC", sans-serif;
  --mono: "Liberation Mono", "Noto Sans CJK SC", monospace;
}
* { box-sizing: border-box; }
body {
  position: relative;
  display: flex;
  flex-direction: column;
  min-height: 100vh;
  margin: 0;
  overflow: hidden;
  background: var(--face);
  color: #222;
  font: 8px/12px var(--cjk);
}
button, input, select { margin: 0; padding: 0; border: 0; background: none; color: inherit; font: inherit; border-radius: 0; }
button { display: flex; align-items: center; justify-content: center; flex: none; white-space: nowrap; }
svg { display: block; flex: none; }
p, h1 { margin: 0; }
.sprites { position: absolute; width: 0; height: 0; }
.latin { font-family: var(--mono); font-size: 7px; }

/* icon paint */
.b { stroke: #2f6496; }
.l { fill: #cfe1f3; }
.w { fill: #f7fafd; }
.y { fill: #e6be45; stroke: #8a6c22; }
.bf { fill: #2f6496; stroke: none; }
.kf { fill: #22272e; stroke: none; }

/* title */
.titlebar {
  display: flex;
  align-items: center;
  height: 16px;
  padding-right: 2px;
  background: linear-gradient(#1668f0, #0453e0 25%, #0560fb 75%, #0347c8);
  color: #fff;
}
.app-icon { width: 12px; height: 12px; margin: 0 2px 0 1px; }
.titlebar h1 { flex: 1; font: bold 9px/14px var(--mono); text-shadow: 1px 1px #0b3189; white-space: nowrap; }
.titlebar h1 span { font-size: 11px; }
.window-buttons { display: flex; gap: 2px; }
.window-buttons button { width: 14px; height: 14px; border: 1px solid #dfe9fb; border-radius: 2px; background: linear-gradient(135deg, #5d8ff0, #1c50d2); }
.window-buttons .close { background: linear-gradient(135deg, #ee8565, #c93a14); }
.window-buttons svg { width: 12px; height: 12px; fill: none; stroke: #fff; }

/* menu */
.menubar { display: flex; align-items: center; height: 15px; padding-right: 1px; }
.doc-icon { width: 12px; height: 12px; margin: 0 3px 0 2px; }
.menus { display: flex; flex: 1; gap: 9px; }
.menus span { font: 7px/12px var(--mono); }
.help-box { width: 139px; height: 12px; padding-left: 2px; background: #fff; border-left: 1px solid var(--edge); }
.help-box::placeholder { color: #8f8f8f; opacity: 1; }
.help-buttons { display: flex; height: 12px; border: 1px solid #c3bfae; background: #f8f7f1; }
.help-buttons button { width: 12px; border-left: 1px solid #d6d2c2; }
.help-buttons .wide { width: 20px; border: 0; gap: 2px; }
.help-buttons svg { width: 10px; height: 10px; fill: none; }
.help-buttons .tiny { width: 6px; height: 6px; }
.mdi-buttons { display: flex; gap: 2px; margin-left: 4px; }
.mdi-buttons button { width: 11px; height: 11px; background: #f6f4ec; }
.mdi-buttons svg { width: 9px; height: 9px; fill: none; stroke: #333; }

/* toolbars */
.toolbar-row { display: flex; height: 20px; border-top: 1px solid #fbfaf5; }
.toolbar-row.second { height: 19px; }
.toolbar { display: flex; align-items: center; gap: 3px; padding: 0 6px 0 10px; border-right: 1px solid var(--edge); box-shadow: 1px 0 #fff; }
.toolbar:last-child { border-right: 0; box-shadow: none; }
.toolbar-row:not(.second) .toolbar:last-child { border-right: 1px solid var(--edge); }
.toolbar > button, .palette > button { width: 12px; height: 12px; }
.toolbar > button svg, .palette > button svg, .layer > svg { width: 12px; height: 12px; fill: none; stroke: #2a2f38; overflow: visible; }
.toolbar > .drop { width: 6px; }
.toolbar > .drop svg { width: 6px; height: 8px; }
.toolbar > i { width: 5px; height: 13px; background: linear-gradient(90deg, transparent 2px, #c5c2b2 2px, #c5c2b2 3px, transparent 3px); }
.toolbar.views > i { width: 4px; }
.combo { display: flex; align-items: center; height: 15px; padding: 0 1px 0 4px; border: 1px solid #7f9db9; background: #fff; }
.combo select { flex: 1; min-width: 0; height: 12px; line-height: 12px; appearance: none; opacity: 1; }
.combo .latin { font-weight: bold; }
.combo .arrow { width: 10px; height: 11px; padding: 2px 1px; background: linear-gradient(#dde8fe, #b5cbf7); color: #2d4b80; }
.combo.off { border-color: #c9c7ba; background: var(--face); color: #aaa797; }
.off .arrow { background: none; color: #c0bdae; }
.workspace { width: 122px; padding-left: 5px; }
.layer { width: 207px; padding-left: 0; }
.swatch { flex: none; width: 8px; height: 8px; border: 1px solid #333; margin: 0 3px 0 1px; background: #fff; }
.cyan { margin: 0 2px 0 0; background: #2ee6dc; }
.view-list { width: 97px; }
.toolbar.views { padding: 0 2px 0 11px; }
.toolbar.props { flex: 1; gap: 4px; padding: 0 0 0 10px; }
.color { width: 104px; padding-left: 2px; }
.linetype { width: 111px; padding-left: 3px; }
.weight { width: 87px; padding-left: 3px; }
.plot { flex: 1; min-width: 40px; border-right: 0; }
.rule { width: 42px; height: 1px; margin-right: 4px; background: #222; }
.rule.short { width: 24px; }

/* drawing area */
.workspace-area { display: flex; flex: 1; border-top: 1px solid #77756b; padding-bottom: 5px; background: #f8f7f2; }
.palette {
  display: flex;
  flex-direction: column;
  align-items: center;
  justify-content: space-between;
  width: 17px;
  padding: 7px 0 6px;
  background: var(--face);
}
.palette.dims { width: 19px; border-left: 1px solid #bbb8a8; }
.palette.modify { width: 19px; padding-bottom: 9px; border-left: 1px solid #fff; }
.palette > i { align-self: stretch; height: 1px; margin: 0 1px; background: #bdbaaa; }
.palette > .group { height: 8px; background: linear-gradient(transparent 3px, #bdbaaa 3px, #bdbaaa 4px, #fff 4px, #fff 5px, transparent 5px); }
.canvas { position: relative; display: flex; flex: 1; min-width: 0; background: #000; border-left: 2px solid #8d8b82; overflow: hidden; }
.drawing { width: 100%; fill: none; }
.corner { stroke: #aaa; stroke-width: 1; }
.outline, .slot { stroke: #4a9590; }
.marker { stroke: #ee4043; stroke-width: 5; fill: #000; }
.pointer { fill: #f34446; }
.ucs { position: absolute; left: 4px; bottom: -1px; width: 90px; height: 96px; fill: none; stroke: #b9b9b9; }
.ucs text { fill: #b9b9b9; stroke: none; font: 300 16px Roboto, sans-serif; }

/* command line */
.command { padding: 6px 6px 1px 12px; border-top: 1px solid #3d3d38; }
.command-box { border-top: 2px solid #77766e; border-left: 1px solid #77766e; background: #fff; font-size: 10px; }
.command span { font-family: var(--mono); }
.history { display: flex; justify-content: space-between; height: 22px; border-bottom: 1px solid #b4b4ae; }
.history p, .prompt label { padding-left: 1px; line-height: 10px; }
.prompt { display: flex; align-items: center; height: 13px; }
.prompt input { flex: 1; min-width: 0; outline: 0; }
.scroll-v { display: flex; flex-direction: column; gap: 1px; }
.scroll-h { display: flex; gap: 1px; margin-right: 11px; width: 45px; justify-content: space-between; }
.scroll-v button, .scroll-h button { width: 11px; height: 10px; border-radius: 2px; background: #c5d6fb; color: #30518c; }
.scroll-v svg, .scroll-h svg { width: 8px; height: 8px; }
.scroll-h b { width: 11px; margin-right: 9px; background: #c5d6fb; border: 1px solid #aec4f2; border-radius: 2px; }
.flip { transform: rotate(180deg); }
.left { transform: rotate(90deg); }
.right { transform: rotate(-90deg); }

/* status */
.statusbar { display: flex; align-items: center; height: 16px; border-top: 2px solid #c4c1b3; padding-left: 3px; }
.statusbar output { width: 150px; height: 13px; padding-left: 1px; border: 1px solid #c5c2b3; color: #a19e90; font: 7px/12px var(--mono); }
.modes { display: flex; flex: 1; gap: 2px; margin-left: 3px; }
.modes button { height: 13px; padding: 0 1px; border: 1px solid #fff; border-right-color: #b3b0a1; border-bottom-color: #b3b0a1; }
.modes .on { border-color: #555 #fff #fff #555; background: #f4f2e8; }
.modes svg { width: 12px; height: 10px; fill: none; }
.modes .steps { border: 0; margin-left: 2px; }
.modes .steps svg { width: 6px; }
.ime { position: relative; display: flex; align-items: center; gap: 3px; height: 14px; padding-right: 2px; background: #f9f9f7; }
.ime svg { width: 12px; height: 12px; fill: none; }
.ime .sogou { width: 18px; height: 16px; }
.ime span { color: #176fb5; font-size: 11px; font-weight: bold; }
.dot { position: absolute; right: 0; top: -2px; width: 6px; height: 5px; border-radius: 3px; background: #ea4b28; }

/* taskbar */
.taskbar { display: flex; height: 21px; background: linear-gradient(#4a88ef, #2159d9 15%, #2258da 85%, #1b49b8); color: #fff; }
.start { gap: 3px; width: 67px; padding-right: 8px; border-radius: 0 8px 8px 0; background: linear-gradient(#5cae5c, #36963b 25%, #379a3a 80%, #23772a); font: italic 13px/18px var(--cjk); text-shadow: 1px 1px #1d5424; }
.start svg { width: 15px; height: 15px; }
.tasks { display: flex; flex: 1; gap: 1px; margin-left: 65px; }
.tasks button { justify-content: flex-start; gap: 4px; width: 110px; height: 18px; margin-top: 2px; padding-left: 7px; border-radius: 2px; background: linear-gradient(#5590f7, #3a7bf1 20%, #3774e8); }
.tasks .active { background: #1b4ab4; }
.tasks svg { width: 11px; height: 11px; }
.tray { display: flex; align-items: center; gap: 4px; width: 54px; border-left: 1px solid #1255a6; background: linear-gradient(#3cb4f4, #118fe7 20%, #128fe6); font: 7px/12px var(--mono); }
.tray button { width: 11px; height: 11px; margin-left: -6px; border-radius: 50%; background: #1674d2; }
.tray button svg { width: 8px; height: 8px; }
.tray .qq { width: 12px; height: 12px; }

.watermark { position: absolute; right: 52px; bottom: 19px; width: 184px; height: 92px; pointer-events: none; }
.paw { fill: #fff; opacity: .7; stroke: #c9c9c9; }
.mark text { fill: #fff; fill-opacity: .75; stroke: #c4c4c4; stroke-width: 1; paint-order: stroke; }
.brand { font: bold 40px "Liberation Sans", sans-serif; }
.du { font: bold 20px "Liberation Sans", sans-serif; }
.cjk { font: bold 31px var(--cjk); }
.site { font: 22px "Liberation Sans", sans-serif; }
```
